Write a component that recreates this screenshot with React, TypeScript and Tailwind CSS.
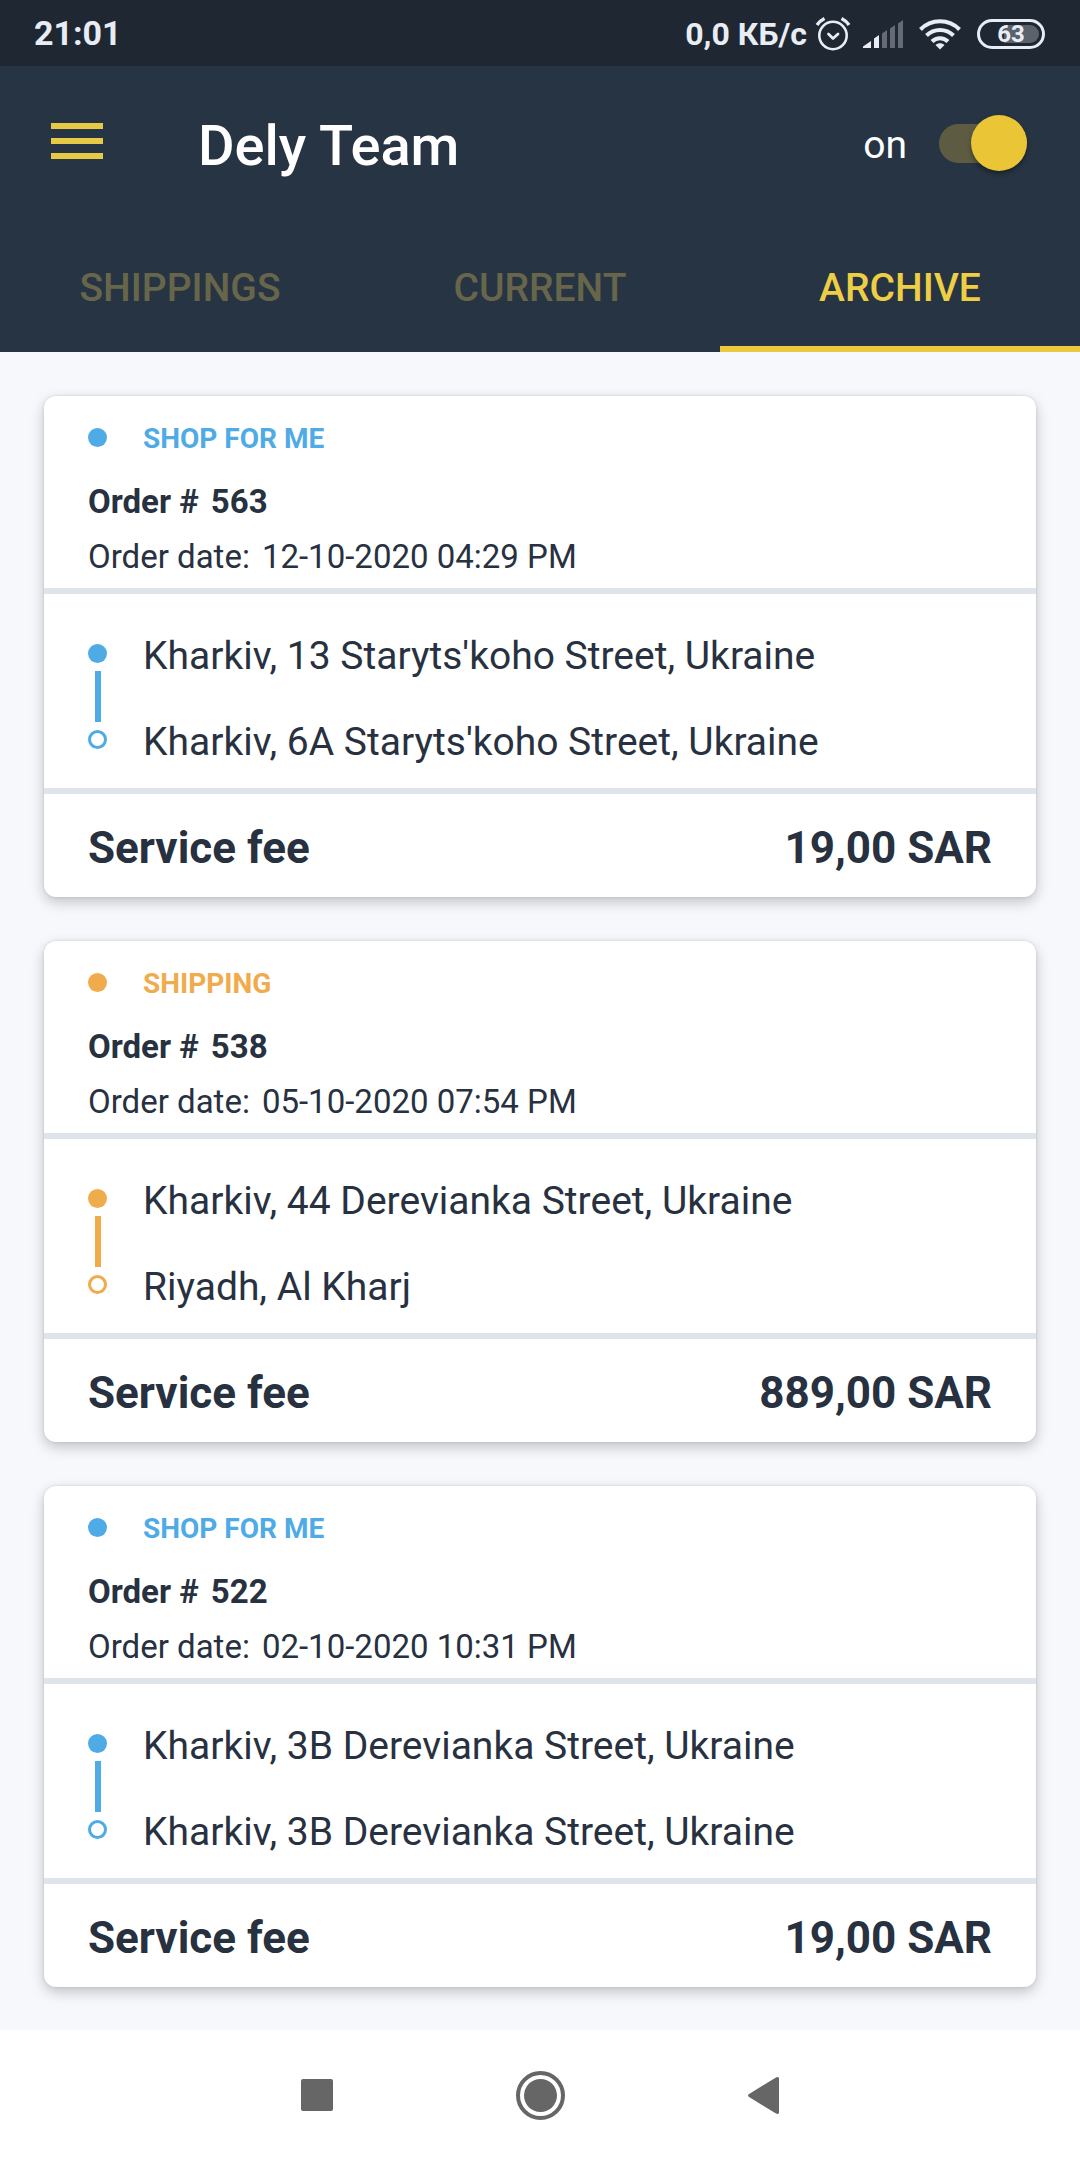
import { useState } from "react";
import clsx from "clsx";

type OrderKind = "shop" | "shipping";

interface OrderType {
  id: number;
  kind: OrderKind;
  date: string;
  from: string;
  to: string;
  fee: string;
}

const orders: OrderType[] = [
  {
    id: 563,
    kind: "shop",
    date: "12-10-2020 04:29 PM",
    from: "Kharkiv, 13 Staryts'koho Street, Ukraine",
    to: "Kharkiv, 6A Staryts'koho Street, Ukraine",
    fee: "19,00 SAR",
  },
  {
    id: 538,
    kind: "shipping",
    date: "05-10-2020 07:54 PM",
    from: "Kharkiv, 44 Derevianka Street, Ukraine",
    to: "Riyadh, Al Kharj",
    fee: "889,00 SAR",
  },
  {
    id: 522,
    kind: "shop",
    date: "02-10-2020 10:31 PM",
    from: "Kharkiv, 3B Derevianka Street, Ukraine",
    to: "Kharkiv, 3B Derevianka Street, Ukraine",
    fee: "19,00 SAR",
  },
];

const kinds = {
  shop: { label: "SHOP FOR ME", color: "text-[#4fabe6]" },
  shipping: { label: "SHIPPING", color: "text-[#f0ab4d]" },
};

const tabs = ["SHIPPINGS", "CURRENT", "ARCHIVE"];

const StatusBar = () => (
  <div className="flex h-[66px] items-center justify-between bg-[#1e2732] pt-px pr-[35px] pl-[34px] font-bold text-[#e8ecf4]">
    <span className="text-[34px]">21:01</span>
    <div className="flex items-center">
      <span className="mr-2 text-[32px]">0,0 КБ/с</span>
      <svg className="mr-3 h-[36px] w-[36px]" viewBox="0 0 36 36" fill="none" stroke="currentColor" strokeLinecap="round">
        <circle cx="18" cy="19.5" r="13.7" strokeWidth="2.6" />
        <path d="M2 9C4 6 6.5 4 9.5 2.500M34 9C32 6 29.500 4 26.500 2.500" strokeWidth="3.400" strokeLinecap="butt" />
        <path d="M13.500 18l4.500 4.500 5-4.500" strokeWidth="2.800" strokeLinejoin="round" />
      </svg>
      <svg className="mr-4 h-[30px] w-[40px]" viewBox="0 0 40 30" fill="currentColor">
        <path d="M0 29v-1.500L8 22v7zM11 29V19.500L16 16v13z" />
        <path d="M19 29V14.500L24 11v18zM27 29V9.500L32 6v23zM35 29V4.500L40 1v28z" opacity="0.350" />
      </svg>
      <svg className="mr-4 h-[32px] w-[42px]" viewBox="0 0 42 32" fill="none" stroke="currentColor" strokeWidth="4">
        <path d="M1.500 11.500C12 .5 30 .5 40.500 11.500" />
        <path d="M7.500 17.500c7.500-7.500 19.500-7.500 27 0" />
        <path d="M13 23.500c4.500-4.500 11.500-4.500 16 0" />
        <path d="M21 31.500l-4.500-4.500c2.500-2.500 6.500-2.500 9 0z" fill="currentColor" stroke="none" />
      </svg>
      <div className="flex h-[30px] w-[68px] items-center rounded-full border-3 border-current p-[3px]">
        <div className="flex h-full w-full items-center justify-center rounded-full bg-linear-to-r from-transparent from-37% to-[#5b626c] to-37% text-[24px] leading-none">
          63
        </div>
      </div>
    </div>
  </div>
);

const Toolbar = () => {
  const [online, setOnline] = useState(true);

  return (
    <div className="flex h-[156px] items-center pr-[53px] pl-[51px] text-white">
      <button aria-label="Menu" className="mr-[95px] flex w-[52px] flex-col gap-[9px] pb-1.5">
        <span className="h-1.5 w-full bg-[#e6c944]" />
        <span className="h-1.5 w-full bg-[#e6c944]" />
        <span className="h-1.5 w-full bg-[#e6c944]" />
      </button>
      <h1 className="grow pt-1 text-[56px] leading-[64px] font-medium">Dely Team</h1>
      <label className="flex items-center text-[39px] leading-[44px]">
        <span className="pt-0.5">on</span>
        <input
          type="checkbox"
          role="switch"
          className="peer sr-only"
          checked={online}
          onChange={(e) => setOnline(e.target.checked)}
        />
        <span className="mb-0.5 ml-8 flex h-[39px] w-[88px] items-center rounded-full bg-[#5d5c43] peer-not-checked:flex-row-reverse">
          <span className="grow" />
          <span className="size-14 rounded-full bg-[#eac636] shadow-[0_3px_5px_rgba(0,0,0,0.35)]" />
        </span>
      </label>
    </div>
  );
};

interface TabBarType {
  active: string;
  setActive: (tab: string) => void;
}

const TabBar = ({ active, setActive }: TabBarType) => (
  <div role="tablist" className="grid grid-cols-3">
    {tabs.map((tab) => (
      <button
        key={tab}
        role="tab"
        aria-selected={tab === active}
        className={clsx(
          "h-[130px] border-b-6 pt-2 text-[39px] font-medium",
          tab === active
            ? "border-[#edca3d] text-[#edce45]"
            : "border-transparent text-[#68664a]"
        )}
        onClick={() => setActive(tab)}
      >
        {tab}
      </button>
    ))}
  </div>
);

const OrderCard = ({ order }: { order: OrderType }) => {
  const { label, color } = kinds[order.kind];

  return (
    <article className="rounded-xl bg-white shadow-[0_5px_14px_rgba(0,0,0,0.22),0_0_3px_rgba(0,0,0,0.12)]">
      <header className="px-11 pt-[21px] pb-1.5">
        <div className={clsx("flex items-center gap-9 text-[28px] leading-[44px] font-bold", color)}>
          <span className="mb-[3px] size-[19px] rounded-full bg-current" />
          {label}
        </div>
        <h2 className="mt-4 flex gap-3 text-[33px] leading-[50px] font-bold">
          <span>Order #</span>
          <span>{order.id}</span>
        </h2>
        <p className="mt-[5px] flex gap-3 text-[33px] leading-[50px]">
          <span>Order date:</span>
          <span>{order.date}</span>
        </p>
      </header>
      <div className="flex items-center gap-9 border-y-6 border-[#dfe4ea] px-11 pt-[38px] pb-[22px]">
        <div className={clsx("flex flex-col items-center gap-2 pb-1.5", color)}>
          <span className="size-[19px] rounded-full bg-current" />
          <span className="h-[51px] w-1.5 bg-current" />
          <span className="size-[19px] rounded-full border-3 border-current" />
        </div>
        <div className="flex flex-col gap-[38px] text-[39px] leading-[48px]">
          <p>{order.from}</p>
          <p>{order.to}</p>
        </div>
      </div>
      <footer className="flex justify-between px-11 pt-7 pb-[23px] text-[44px] leading-[52px] font-bold">
        <span>Service fee</span>
        <span>{order.fee}</span>
      </footer>
    </article>
  );
};

const NavBar = () => (
  <nav className="flex h-[130px] items-center justify-center gap-[173px] bg-white text-[#666]">
    <button aria-label="Recent apps" className="grid size-[52px] place-items-center">
      <span className="size-8 rounded-xs bg-current" />
    </button>
    <button aria-label="Home" className="grid size-[49px] place-items-center rounded-full border-4 border-current">
      <span className="size-[33px] rounded-full bg-current" />
    </button>
    <button aria-label="Back" className="grid size-[52px] place-items-center">
      <svg className="h-[37px] w-[31px]" viewBox="0 0 31 37" fill="currentColor">
        <path d="M.7 17.300 28 .4Q30 -.4 31 1V36Q30 37.400 28 36.600L.7 19.700Q-.6 18.500.7 17.300z" />
      </svg>
    </button>
  </nav>
);

const App = () => {
  const [active, setActive] = useState("ARCHIVE");

  return (
    <div className="flex min-h-screen flex-col bg-[#f6f8fc] font-[Roboto,sans-serif] text-[#28313f]">
      <StatusBar />
      <div className="bg-[#273443]">
        <Toolbar />
        <TabBar active={active} setActive={setActive} />
      </div>
      <main className="flex grow flex-col gap-11 px-11 pt-11 pb-[43px]">
        {orders.map((order) => (
          <OrderCard key={order.id} order={order} />
        ))}
      </main>
      <NavBar />
    </div>
  );
};

export default App;
